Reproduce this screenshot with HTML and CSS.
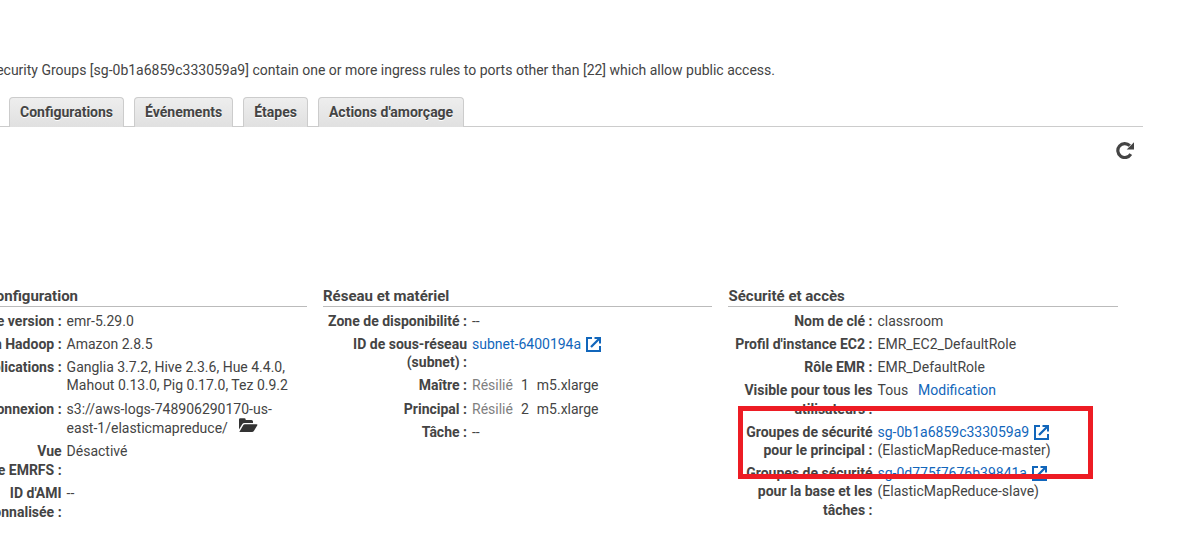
FILE: index.html
```html
<!DOCTYPE html>
<html lang="fr">
<head>
<meta charset="utf-8">
<title>Cluster</title>
<link rel="stylesheet" href="styles.css">
</head>
<body>
<svg class="defs" aria-hidden="true">
  <symbol id="ext" viewBox="0 0 15 15">
    <path d="M6 1H1v13h13V9" fill="none" stroke="currentColor" stroke-width="2"/>
    <path d="M8.500 0H15v6.500h-2V3.600L5.800 10.800 4.200 9.200 11.400 2H8.500z" fill="currentColor"/>
  </symbol>
</svg>
<p class="notice"><span>ecurity Groups [sg-0b1a6859c333059a9] contain one or more ingress rules to ports other than [22] which allow public access.</span></p>
<nav class="tabs">
  <a class="tab">Configurations</a>
  <a class="tab">Événements</a>
  <a class="tab">Étapes</a>
  <a class="tab">Actions d'amorçage</a>
</nav>
<div class="toolbar">
  <svg class="refresh" viewBox="0 0 18 18"><path d="M14.800 13.200A7 7 0 1 1 13.800 4.600" fill="none" stroke="currentColor" stroke-width="3.200"/><path d="M18 1.200V8.500H10.700z" fill="currentColor"/></svg>
</div>
<main class="columns">
  <section class="column first">
    <h2>Configuration</h2>
    <dl>
      <dt>e version :</dt><dd>emr-5.29.0</dd>
      <dt>n Hadoop :</dt><dd>Amazon 2.8.5</dd>
      <dt>plications :</dt><dd>Ganglia 3.7.2, Hive 2.3.6, Hue 4.4.0,<br>Mahout 0.13.0, Pig 0.17.0, Tez 0.9.2</dd>
      <dt>onnexion :</dt><dd>s3://aws-logs-748906290170-us-<br>east-1/elasticmapreduce/<svg class="folder" viewBox="0 0 20 15"><path d="M1 11.5V1.5Q1 .3 2.200 .3h4.300Q7.500 .3 7.700 1.500V2H13.500Q15 2 15 3.500V5H6.500Q5 5 4.200 6.200z" fill="currentColor"/><path d="M1.300 14 5.200 7.300Q5.700 6.300 7 6.300H18.500Q20 6.300 19.200 7.600L16 12.800Q15.300 14 14 14z" fill="currentColor"/></svg></dd>
      <dt>Vue<br>e EMRFS :</dt><dd>Désactivé</dd>
      <dt>ID d'AMI<br>onnalisée :</dt><dd>--</dd>
    </dl>
  </section>
  <section class="column">
    <h2>Réseau et matériel</h2>
    <dl>
      <dt>Zone de disponibilité :</dt><dd>--</dd>
      <dt>ID de sous-réseau<br>(subnet) :</dt><dd><a>subnet-6400194a</a><svg class="ext"><use href="#ext"/></svg></dd>
      <dt>Maître :</dt><dd class="nodes"><span class="ended">Résilié</span><span>1</span><span>m5.xlarge</span></dd>
      <dt>Principal :</dt><dd class="nodes"><span class="ended">Résilié</span><span>2</span><span>m5.xlarge</span></dd>
      <dt>Tâche :</dt><dd>--</dd>
    </dl>
  </section>
  <section class="column last">
    <h2>Sécurité et accès</h2>
    <dl>
      <dt>Nom de clé :</dt><dd>classroom</dd>
      <dt>Profil d'instance EC2 :</dt><dd>EMR_EC2_DefaultRole</dd>
      <dt>Rôle EMR :</dt><dd>EMR_DefaultRole</dd>
      <dt>Visible pour tous les<br>utilisateurs :</dt><dd>Tous<a class="edit">Modification</a></dd>
      <dt>Groupes de sécurité<br>pour le principal :</dt><dd><a>sg-0b1a6859c333059a9</a><svg class="ext"><use href="#ext"/></svg><br>(ElasticMapReduce-master)</dd>
      <dt>Groupes de sécurité<br>pour la base et les<br>tâches :</dt><dd><a>sg-0d775f7676b39841a</a><svg class="ext"><use href="#ext"/></svg><br>(ElasticMapReduce-slave)</dd>
    </dl>
  </section>
</main>
<div class="highlight"></div>
</body>
</html>
```
FILE: styles.css
```css
* { box-sizing: border-box; }
body {
  margin: 0;
  width: 1177px;
  height: 534px;
  overflow: hidden;
  position: relative;
  background: #fff;
  color: #444;
  font: 14px/18.5px Roboto, sans-serif;
}
.defs { display: none; }
.notice {
  margin: 0;
  padding-top: 61px;
  height: 97px;
  width: 775px;
  display: flex;
  justify-content: flex-end;
  white-space: nowrap;
}
.tabs {
  display: flex;
  align-items: flex-start;
  gap: 10px;
  width: 1143px;
  height: 30px;
  padding-left: 9px;
  border-bottom: 1px solid #ccc;
}
.tab {
  height: 30px;
  padding: 0 10px;
  line-height: 28px;
  font-weight: 700;
  border: 1px solid #ccc;
  border-bottom: 0;
  border-radius: 4px 4px 0 0;
  background: linear-gradient(#eee, #e0e0e0);
  text-shadow: 0 1px 0 #fff;
  white-space: nowrap;
}
.toolbar {
  height: 160px;
  width: 1134px;
  padding-top: 14px;
  display: flex;
  justify-content: flex-end;
}
.refresh { width: 18px; height: 18px; }
.columns {
  display: grid;
  grid-template-columns: 321px 389px 390px;
  column-gap: 16px;
  margin-left: -14px;
}
h2 {
  margin: 0;
  height: 20px;
  font-size: 15px;
  line-height: 18px;
  font-weight: 700;
  border-bottom: 1px solid #bbb;
  white-space: nowrap;
}
dl {
  margin: 4.6px 0 0;
  display: grid;
  grid-template-columns: 144px 1fr;
  column-gap: 5px;
  row-gap: 4.7px;
  white-space: nowrap;
}
.first dl { grid-template-columns: 75.6px 1fr; }
.last h2 { padding-left: 0.5px; }
.last dl { padding-left: 0.5px; }
.last dt:last-of-type, .last dd:last-of-type { margin-top: -0.6px; }
dt { text-align: right; font-weight: 700; }
dd { margin: 0; }
a { color: #1166bb; }
.tab { color: #444; }
.ext { width: 15px; height: 15px; margin-left: 5px; vertical-align: -3px; color: #1166bb; }
.folder { width: 20px; height: 15px; margin-left: 10px; color: #333; }
.nodes { display: flex; gap: 8px; }
.ended { color: #808080; }
.edit { margin-left: 10px; }
.highlight {
  position: absolute;
  left: 738px;
  top: 406px;
  width: 355px;
  height: 73px;
  border: 5px solid #ed1c24;
}
```
